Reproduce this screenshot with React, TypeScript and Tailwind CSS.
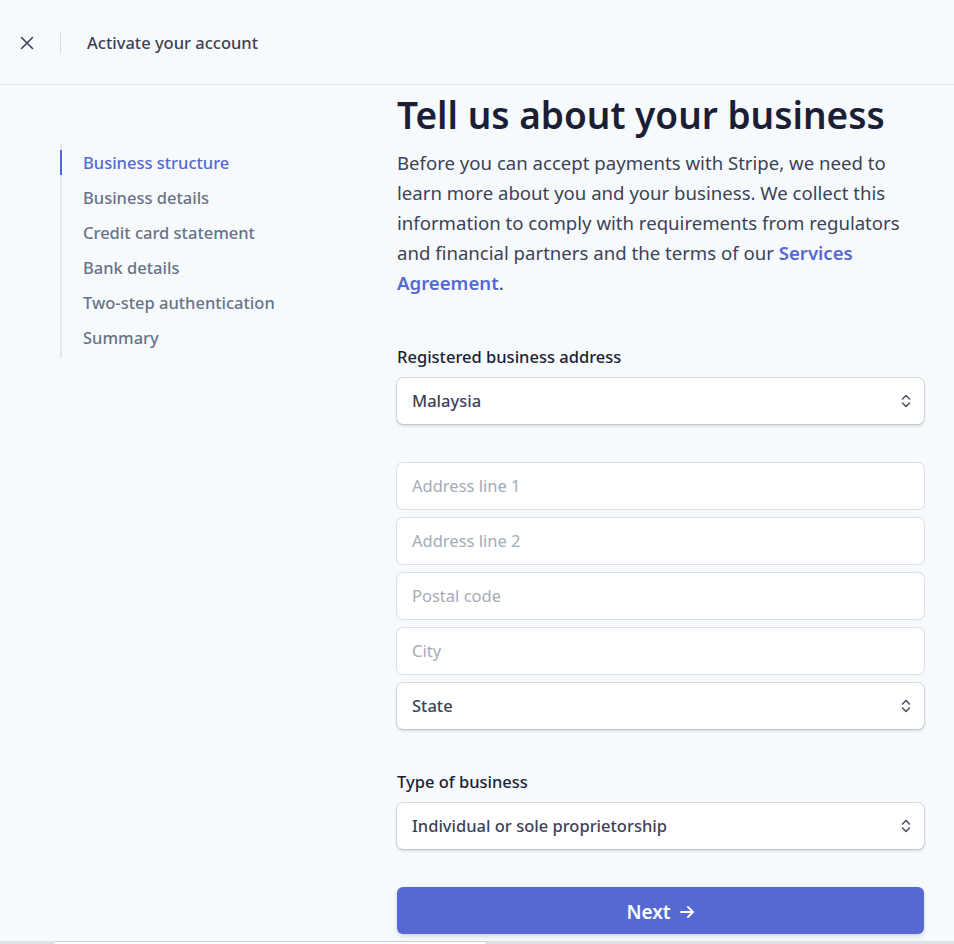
import React from 'react';

const font = { fontFamily: '"Noto Sans", "Open Sans", Arial, sans-serif' };

const steps = [
  'Business structure',
  'Business details',
  'Credit card statement',
  'Bank details',
  'Two-step authentication',
  'Summary',
];

function Chevrons() {
  return (
    <svg width="12" height="16" viewBox="0 0 12 16" fill="none" stroke="#4f566b" strokeWidth="1.6" strokeLinecap="round" strokeLinejoin="round">
      <path d="M2.5 6 6 2.5 9.5 6" />
      <path d="M2.5 10 6 13.5 9.5 10" />
    </svg>
  );
}

function SelectBox({ value }: { value: string }) {
  return (
    <div className="h-[46px] bg-white rounded-md shadow-[0_0_0_1px_rgba(60,66,87,0.16),0_2px_3px_rgba(60,66,87,0.18)] flex items-center justify-between pl-[15px] pr-[12px]">
      <span className="text-[16.5px] font-medium text-[#3c4257]">{value}</span>
      <Chevrons />
    </div>
  );
}

function TextBox({ placeholder }: { placeholder: string }) {
  return (
    <div className="h-[46px] bg-white rounded-md shadow-[0_0_0_1px_rgba(60,66,87,0.14)] flex items-center pl-[15px]">
      <span className="text-[16.5px] text-[#a3acb9]">{placeholder}</span>
    </div>
  );
}

export default function App() {
  return (
    <div className="w-[954px] h-[944px] overflow-hidden bg-[#f7fafc] flex flex-col" style={font}>
      <header className="h-[85px] shrink-0 border-b border-[#e3e8ee] flex items-center">
        <div className="w-[60px] flex justify-center">
          <svg width="14" height="14" viewBox="0 0 14 14" stroke="#3c4257" strokeWidth="1.6" strokeLinecap="round" className="-ml-[6px] mt-[2px]">
            <path d="M1.5 1.5 12.5 12.5M12.5 1.5 1.5 12.5" />
          </svg>
        </div>
        <div className="w-px h-[20px] bg-[#d5dbe1] mt-[2px]" />
        <h1 className="ml-[26px] mt-[2px] text-[16.5px] font-medium text-[#3c4257]">Activate your account</h1>
      </header>

      <div className="flex flex-1 min-h-0">
        <nav className="w-[397px] shrink-0 pl-[60px] pt-[59px]">
          <ul className="border-l-2 border-[#e3e8ee] w-fit py-[2px]">
            {steps.map((s, i) => (
              <li
                key={s}
                className={
                  'relative h-[35px] flex items-center pl-[21px] text-[16.5px] font-medium ' +
                  (i === 0
                    ? 'text-[#5469d4] before:absolute before:-left-[2px] before:top-[4px] before:h-[25px] before:w-[2px] before:bg-[#5469d4]'
                    : 'text-[#697386]')
                }
              >
                {s}
              </li>
            ))}
          </ul>
        </nav>

        <main className="w-[527px] pt-[8px]">
          <h2 className="text-[37px] leading-[44px] font-semibold text-[#1a1f36]">Tell us about your business</h2>
          <p className="mt-[11px] text-[18.6px] leading-[30px] text-[#3c4257]">
            Before you can accept payments with Stripe, we need to learn more about you and your business. We collect this
            information to comply with requirements from regulators and financial partners and the terms of our{' '}
            <span className="font-semibold text-[#5469d4]">Services Agreement</span>.
          </p>

          <div className="mt-[47px]">
            <label className="block text-[16.5px] font-medium text-[#1a1f36] leading-[24px]">Registered business address</label>
            <div className="mt-[9px]">
              <SelectBox value="Malaysia" />
            </div>
          </div>

          <div className="mt-[39px] flex flex-col gap-[9px]">
            <TextBox placeholder="Address line 1" />
            <TextBox placeholder="Address line 2" />
            <TextBox placeholder="Postal code" />
            <TextBox placeholder="City" />
            <SelectBox value="State" />
          </div>

          <div className="mt-[41px]">
            <label className="block text-[16.5px] font-medium text-[#1a1f36] leading-[24px]">Type of business</label>
            <div className="mt-[9px]">
              <SelectBox value="Individual or sole proprietorship" />
            </div>
          </div>

          <button className="mt-[38px] w-full h-[47px] rounded-md bg-[#5469d4] text-white text-[19px] font-semibold flex items-center justify-center gap-[8px] pt-[3px] shadow-[0_2px_4px_rgba(60,66,87,0.2)]">
            Next
            <svg width="16" height="14" viewBox="0 0 16 14" fill="none" stroke="white" strokeWidth="2" strokeLinecap="round" strokeLinejoin="round">
              <path d="M2 7h12M9 2l5 5-5 5" />
            </svg>
          </button>
        </main>
      </div>

      <div className="h-[3px] shrink-0 bg-[#dde1e8] flex">
        <div className="ml-[55px] w-[430px] bg-white border-t border-[#c9ced6]" />
      </div>
    </div>
  );
}
